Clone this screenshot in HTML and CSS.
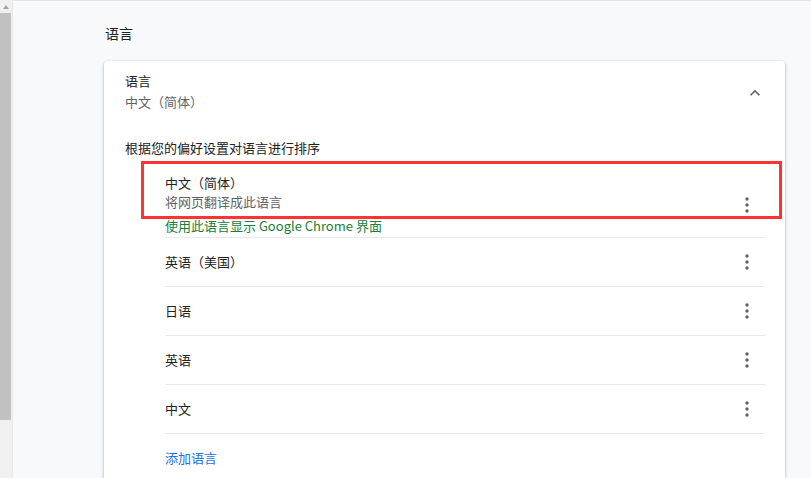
FILE: index.html
```html
<!DOCTYPE html>
<html lang="zh-CN">
<head>
    <meta charset="UTF-8">
    <title>设置 - 语言</title>
    <link rel="stylesheet" href="styles.css">
</head>
<body>
    <div class="scrollbar">
        <div class="scroll-arrow"></div>
        <div class="scroll-thumb"></div>
    </div>
    <div class="page">
        <h2 class="section-title">语言</h2>
        <div class="card">
            <div class="summary">
                <div>
                    <div class="primary">语言</div>
                    <div class="secondary">中文（简体）</div>
                </div>
                <svg class="chevron" width="20" height="20" viewBox="0 0 24 24">
                    <path d="M12 8l-6 6 1.41 1.41L12 10.83l4.59 4.58L18 14z" fill="#5f6368"/>
                </svg>
            </div>
            <div class="list-label">根据您的偏好设置对语言进行排序</div>

            <div class="lang-list">
                <div class="lang-item first">
                    <div class="first-top">
                        <div>
                            <div class="primary">中文（简体）</div>
                            <div class="secondary small-line">将网页翻译成此语言</div>
                        </div>
                        <svg class="dots dots-low" width="20" height="20" viewBox="0 0 20 20">
                            <circle cx="10" cy="4" r="1.7"/><circle cx="10" cy="10" r="1.7"/><circle cx="10" cy="16" r="1.7"/>
                        </svg>
                    </div>
                    <div class="ui-lang">使用此语言显示 Google Chrome 界面</div>
                </div>
                <div class="lang-item">
                    <span>英语（美国）</span>
                    <svg class="dots" width="20" height="20" viewBox="0 0 20 20">
                        <circle cx="10" cy="4" r="1.7"/><circle cx="10" cy="10" r="1.7"/><circle cx="10" cy="16" r="1.7"/>
                    </svg>
                </div>
                <div class="lang-item">
                    <span>日语</span>
                    <svg class="dots" width="20" height="20" viewBox="0 0 20 20">
                        <circle cx="10" cy="4" r="1.7"/><circle cx="10" cy="10" r="1.7"/><circle cx="10" cy="16" r="1.7"/>
                    </svg>
                </div>
                <div class="lang-item">
                    <span>英语</span>
                    <svg class="dots" width="20" height="20" viewBox="0 0 20 20">
                        <circle cx="10" cy="4" r="1.7"/><circle cx="10" cy="10" r="1.7"/><circle cx="10" cy="16" r="1.7"/>
                    </svg>
                </div>
                <div class="lang-item">
                    <span>中文</span>
                    <svg class="dots" width="20" height="20" viewBox="0 0 20 20">
                        <circle cx="10" cy="4" r="1.7"/><circle cx="10" cy="10" r="1.7"/><circle cx="10" cy="16" r="1.7"/>
                    </svg>
                </div>
                <div class="lang-item add">
                    <a href="#" class="add-link">添加语言</a>
                </div>
            </div>

            <!-- 标注框 -->
            <div class="highlight"></div>
        </div>
    </div>
</body>
</html>
```

FILE: styles.css
```css
body {
    margin: 0;
    height: 478px;
    overflow: hidden;
    display: flex;
    font-family: "Noto Sans CJK SC", "Liberation Sans", sans-serif;
    font-size: 13px;
    color: #202124;
    background-color: #f8f9fa;
}

/* 左侧滚动条 */
.scrollbar {
    width: 12px;
    flex-shrink: 0;
    background-color: #f0f0f0;
    border-right: 1px solid #e8e8e8;
    display: flex;
    flex-direction: column;
}

.scroll-arrow {
    height: 13px;
    display: flex;
    justify-content: center;
    align-items: center;
}

.scroll-arrow::before {
    content: "";
    border-left: 3.5px solid transparent;
    border-right: 3.5px solid transparent;
    border-bottom: 4px solid #a3a3a3;
}

.scroll-thumb {
    height: 407px;
    width: 11px;
    background-color: #c1c1c1;
}

/* 主内容 */
.page {
    flex: 1;
    border-top: 1px solid #e3e3e3;
    padding: 22px 26px 0 91px;
}

.section-title {
    margin: 0 0 18px 1px;
    font-size: 14px;
    font-weight: normal;
    line-height: 20px;
    color: #202124;
}

.card {
    position: relative;
    background-color: white;
    border-radius: 4px;
    box-shadow: 0 1px 2px rgba(60, 64, 67, 0.3), 0 1px 3px 1px rgba(60, 64, 67, 0.15);
    padding: 10px 20px 0 21px;
    height: 480px;
}

.primary {
    line-height: 20px;
}

.secondary {
    line-height: 20px;
    margin-top: 1px;
    color: #5f6368;
}

.summary {
    display: flex;
    justify-content: space-between;
    align-items: center;
}

.chevron {
    margin-top: 3px;
}

.list-label {
    margin-top: 26px;
    line-height: 20px;
}

.lang-list {
    padding-left: 40px;
}

.lang-item {
    height: 46px;
    padding-bottom: 2px;
    border-bottom: 1px solid #e8eaed;
    display: flex;
    justify-content: space-between;
    align-items: center;
}

.lang-item.first {
    height: auto;
    display: block;
    padding: 15px 0 1px;
}

.first-top {
    display: flex;
    justify-content: space-between;
    align-items: flex-end;
}

.small-line {
    line-height: 18px;
    margin-top: 0;
}

.ui-lang {
    margin-top: 5px;
    line-height: 20px;
    color: #188038;
}

.dots {
    fill: #5f6368;
    margin-right: 8px;
}

.lang-item .dots {
    margin-bottom: -2px;
}

.lang-item .dots-low {
    margin-bottom: -4px;
}

.lang-item.add {
    border-bottom: none;
}

.add-link {
    color: #1a73e8;
    text-decoration: none;
}

/* 红色标注框 */
.highlight {
    position: absolute;
    left: 37px;
    top: 100px;
    width: 635px;
    height: 52px;
    border: 3px solid #ff3333;
}
```
